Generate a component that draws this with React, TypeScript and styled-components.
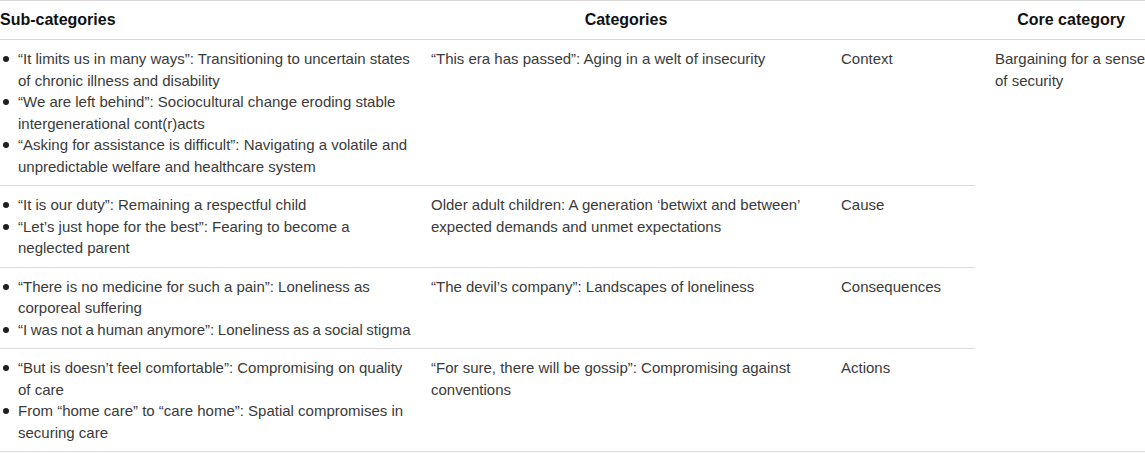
import React from "react";
import styled, { createGlobalStyle } from "styled-components";

const Global = createGlobalStyle`
  html, body { margin: 0; padding: 0; background: #ffffff; }
  body { font-family: "Liberation Sans", Arial, Helvetica, sans-serif; overflow: hidden; }
`;

const Viewport = styled.div`
  width: 1145px;
  overflow: hidden;
`;

const Table = styled.div`
  display: grid;
  grid-template-columns: 411px 410px 154px 172px;
  width: 1147px;
  border-top: 1px solid #d9d9d9;
  color: #3a3a3a;
  font-size: 15px;
  line-height: 21.5px;
`;

const HeadCell = styled.div<{ $align?: string; $first?: boolean }>`
  padding: 8px 0 8px ${(p) => (p.$first ? "0" : "20px")};
  font-size: 16px;
  line-height: 22px;
  font-weight: 700;
  color: #111;
  text-align: ${(p) => p.$align || "left"};
  border-bottom: 1px solid #d9d9d9;
`;

const Cell = styled.div<{ $first?: boolean }>`
  padding: 8px 0 8px ${(p) => (p.$first ? "0" : "20px")};
  border-bottom: 1px solid #d9d9d9;
`;

const CoreCell = styled.div`
  grid-row: 2 / span 4;
  grid-column: 4;
  padding: 8px 0 8px 20px;
  border-bottom: 1px solid #d9d9d9;
`;

const List = styled.ul`
  list-style: none;
  margin: 0;
  padding: 0;
`;

const Item = styled.li<{ $tight?: boolean }>`
  display: flex;
  white-space: ${(p) => (p.$tight ? "nowrap" : "normal")};
  word-spacing: ${(p) => (p.$tight ? "-0.6px" : "normal")};
`;

const Bullet = styled.span`
  flex: 0 0 18px;
  display: flex;
  align-items: flex-start;
  padding-left: 3px;
  box-sizing: border-box;
  &::before {
    content: "";
    width: 6px;
    height: 6px;
    border-radius: 50%;
    background: #1f1f1f;
    margin-top: 8px;
  }
`;

type Sub = { text: string; tight?: boolean };

const rows: { subs: Sub[]; cat: string; type: string }[] = [
  {
    subs: [
      { text: "“It limits us in many ways”: Transitioning to uncertain states of chronic illness and disability" },
      { text: "“We are left behind”: Sociocultural change eroding stable intergenerational cont(r)acts" },
      { text: "“Asking for assistance is difficult”: Navigating a volatile and unpredictable welfare and healthcare system" },
    ],
    cat: "“This era has passed”: Aging in a welt of insecurity",
    type: "Context",
  },
  {
    subs: [
      { text: "“It is our duty”: Remaining a respectful child" },
      { text: "“Let’s just hope for the best”: Fearing to become a neglected parent" },
    ],
    cat: "Older adult children: A generation ‘betwixt and between’ expected demands and unmet expectations",
    type: "Cause",
  },
  {
    subs: [
      { text: "“There is no medicine for such a pain”: Loneliness as corporeal suffering" },
      { text: "“I was not a human anymore”: Loneliness as a social stigma", tight: true },
    ],
    cat: "“The devil’s company”: Landscapes of loneliness",
    type: "Consequences",
  },
  {
    subs: [
      { text: "“But is doesn’t feel comfortable”: Compromising on quality of care" },
      { text: "From “home care” to “care home”: Spatial compromises in securing care" },
    ],
    cat: "“For sure, there will be gossip”: Compromising against conventions",
    type: "Actions",
  },
];

export default function App() {
  return (
    <>
      <Global />
      <Viewport>
        <Table>
          <HeadCell $first>Sub-categories</HeadCell>
          <HeadCell $align="center">Categories</HeadCell>
          <HeadCell />
          <HeadCell $align="center">Core category</HeadCell>
          {rows.map((r, i) => (
            <React.Fragment key={i}>
              <Cell $first>
                <List>
                  {r.subs.map((s, j) => (
                    <Item key={j} $tight={s.tight}>
                      <Bullet />
                      <span>{s.text}</span>
                    </Item>
                  ))}
                </List>
              </Cell>
              <Cell>{r.cat}</Cell>
              <Cell>{r.type}</Cell>
              {i === 0 && <CoreCell>Bargaining for a sense of security</CoreCell>}
            </React.Fragment>
          ))}
        </Table>
      </Viewport>
    </>
  );
}
